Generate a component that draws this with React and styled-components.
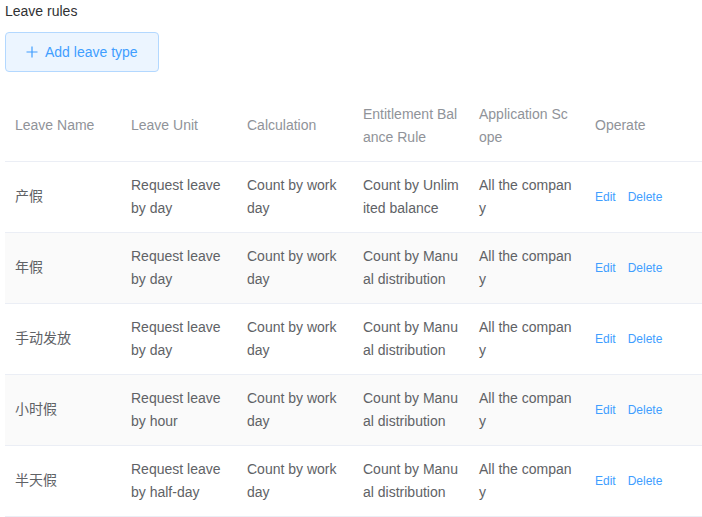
import React from "react";
import styled, { createGlobalStyle } from "styled-components";

const rows = [
  { name: "产假", unit: "Request leave by day", calc: "Count by work day", rule: "Count by Unlimited balance", scope: "All the company" },
  { name: "年假", unit: "Request leave by day", calc: "Count by work day", rule: "Count by Manual distribution", scope: "All the company" },
  { name: "手动发放", unit: "Request leave by day", calc: "Count by work day", rule: "Count by Manual distribution", scope: "All the company" },
  { name: "小时假", unit: "Request leave by hour", calc: "Count by work day", rule: "Count by Manual distribution", scope: "All the company" },
  { name: "半天假", unit: "Request leave by half-day", calc: "Count by work day", rule: "Count by Manual distribution", scope: "All the company" },
];

const headers = ["Leave Name", "Leave Unit", "Calculation", "Entitlement Balance Rule", "Application Scope", "Operate"];

const App = () => {
  return (
    <Page>
      <GlobalStyle />
      <Title>Leave rules</Title>
      <AddButton type="button">
        <svg width="12" height="12" viewBox="0 0 12 12">
          <path d="M6 0.5V11.5M0.5 6H11.5" stroke="#409eff" strokeWidth="1.2" fill="none" />
        </svg>
        Add leave type
      </AddButton>
      <Table>
        <colgroup>
          {headers.map((h, i) => (
            <Col key={h} $last={i === headers.length - 1} />
          ))}
        </colgroup>
        <thead>
          <tr>
            {headers.map((h) => (
              <Th key={h}>{h}</Th>
            ))}
          </tr>
        </thead>
        <tbody>
          {rows.map((r, i) => (
            <Tr key={r.name} $striped={i % 2 === 1}>
              <Td>{r.name}</Td>
              <Td>{r.unit}</Td>
              <Td>{r.calc}</Td>
              <Td>{r.rule}</Td>
              <Td>{r.scope}</Td>
              <Td>
                <Actions>
                  <LinkButton>Edit</LinkButton>
                  <LinkButton>Delete</LinkButton>
                </Actions>
              </Td>
            </Tr>
          ))}
        </tbody>
      </Table>
    </Page>
  );
};

export default App;

const GlobalStyle = createGlobalStyle`
  body {
    margin: 0;
    background: #fff;
    font-family: "Liberation Sans", Arial, "Noto Sans CJK SC", sans-serif;
  }
`;

const Page = styled.div`
  padding: 0 0 0 5px;
  width: 697px;
`;

const Title = styled.div`
  font-size: 14px;
  line-height: 22px;
  color: #303133;
`;

const AddButton = styled.button`
  margin-top: 10px;
  display: flex;
  align-items: center;
  gap: 7px;
  height: 40px;
  width: 154px;
  padding: 0 0 0 20px;
  background: #ecf5ff;
  border: 1px solid #b3d8ff;
  border-radius: 4px;
  color: #409eff;
  font-family: inherit;
  font-size: 14px;
  cursor: pointer;
`;

const Table = styled.table`
  margin-top: 18px;
  width: 697px;
  border-collapse: collapse;
  table-layout: fixed;
  font-size: 14px;
`;

const Col = styled.col`
  width: ${({ $last }) => ($last ? "117px" : "116px")};
`;

const Th = styled.th`
  box-sizing: border-box;
  height: 71px;
  padding: 1px 10px 0;
  text-align: left;
  font-weight: normal;
  color: #909399;
  line-height: 23px;
  word-break: break-all;
  border-bottom: 1px solid #ebeef5;
  vertical-align: middle;
`;

const Tr = styled.tr`
  background: ${({ $striped }) => ($striped ? "#fafafa" : "#fff")};
`;

const Td = styled.td`
  box-sizing: border-box;
  height: 71px;
  padding: 0 10px;
  color: #606266;
  line-height: 23px;
  word-break: break-all;
  border-bottom: 1px solid #ebeef5;
  vertical-align: middle;
`;

const Actions = styled.div`
  display: flex;
  gap: 12px;
  padding-top: 2px;
`;

const LinkButton = styled.span`
  font-size: 12px;
  color: #409eff;
  cursor: pointer;
`;
